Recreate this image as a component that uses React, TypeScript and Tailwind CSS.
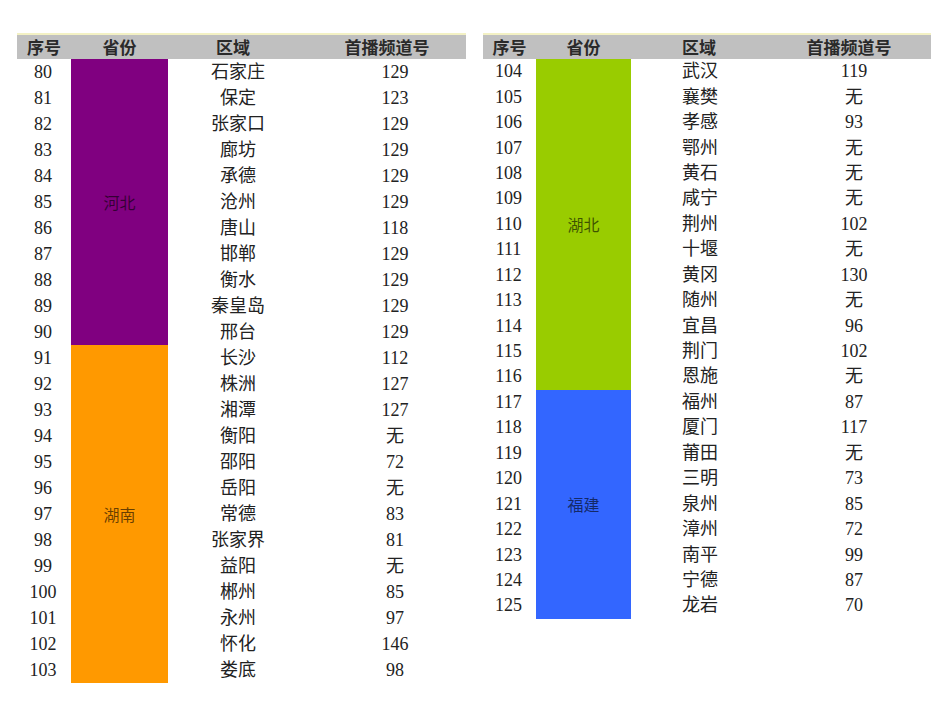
import React from "react";

type Row = [number, string, string];
type Group = { name: string; color: string; rows: Row[] };

const leftGroups: Group[] = [
  {
    name: "河北",
    color: "bg-[#800080]",
    rows: [
      [80, "石家庄", "129"],
      [81, "保定", "123"],
      [82, "张家口", "129"],
      [83, "廊坊", "129"],
      [84, "承德", "129"],
      [85, "沧州", "129"],
      [86, "唐山", "118"],
      [87, "邯郸", "129"],
      [88, "衡水", "129"],
      [89, "秦皇岛", "129"],
      [90, "邢台", "129"],
    ],
  },
  {
    name: "湖南",
    color: "bg-[#ff9900]",
    rows: [
      [91, "长沙", "112"],
      [92, "株洲", "127"],
      [93, "湘潭", "127"],
      [94, "衡阳", "无"],
      [95, "邵阳", "72"],
      [96, "岳阳", "无"],
      [97, "常德", "83"],
      [98, "张家界", "81"],
      [99, "益阳", "无"],
      [100, "郴州", "85"],
      [101, "永州", "97"],
      [102, "怀化", "146"],
      [103, "娄底", "98"],
    ],
  },
];

const rightGroups: Group[] = [
  {
    name: "湖北",
    color: "bg-[#99cc00]",
    rows: [
      [104, "武汉", "119"],
      [105, "襄樊", "无"],
      [106, "孝感", "93"],
      [107, "鄂州", "无"],
      [108, "黄石", "无"],
      [109, "咸宁", "无"],
      [110, "荆州", "102"],
      [111, "十堰", "无"],
      [112, "黄冈", "130"],
      [113, "随州", "无"],
      [114, "宜昌", "96"],
      [115, "荆门", "102"],
      [116, "恩施", "无"],
    ],
  },
  {
    name: "福建",
    color: "bg-[#3366ff]",
    rows: [
      [117, "福州", "87"],
      [118, "厦门", "117"],
      [119, "莆田", "无"],
      [120, "三明", "73"],
      [121, "泉州", "85"],
      [122, "漳州", "72"],
      [123, "南平", "99"],
      [124, "宁德", "87"],
      [125, "龙岩", "70"],
    ],
  },
];

interface TableProps {
  groups: Group[];
  rowH: number;
  rowCls: string;
  cols: [string, string, string, string];
  headCls: [string, string, string, string];
  cityCls: string;
  valueCls: string;
}

function ChannelTable({ groups, rowH, rowCls, cols, headCls, cityCls, valueCls }: TableProps) {
  const rows = groups.flatMap((g) => g.rows);

  return (
    <div className="flex flex-col">
      <div className="h-[2px] bg-[#f3f1c4]" />
      <div className="flex h-[24px] items-center bg-[#c0c0c0] text-[17px] font-bold text-[#2a2a2a] font-['Noto_Sans_CJK_SC',sans-serif]">
        <div className={`${cols[0]} ${headCls[0]} text-center`}>序号</div>
        <div className={`${cols[1]} ${headCls[1]} text-center`}>省份</div>
        <div className={`${cols[2]} ${headCls[2]} text-center`}>区域</div>
        <div className={`${cols[3]} ${headCls[3]} text-center`}>首播频道号</div>
      </div>
      <div className="flex text-[18px] text-[#222] font-['Liberation_Serif','Noto_Sans_CJK_SC',serif]">
        <div className={`${cols[0]} flex flex-col`}>
          {rows.map((r) => (
            <div key={r[0]} className={`${rowCls} flex items-center justify-center pr-[2px]`}>
              {r[0]}
            </div>
          ))}
        </div>
        <div className={`${cols[1]} flex flex-col`}>
          {groups.map((g) => (
            <div
              key={g.name}
              style={{ height: g.rows.length * rowH }}
              className={`${g.color} flex items-center justify-center text-[16px] text-black/60 font-['Noto_Sans_CJK_SC',sans-serif]`}
            >
              {g.name}
            </div>
          ))}
        </div>
        <div className={`${cols[2]} ${cityCls} flex flex-col`}>
          {rows.map((r) => (
            <div key={r[0]} className={`${rowCls} flex items-center justify-center`}>
              {r[1]}
            </div>
          ))}
        </div>
        <div className={`${cols[3]} ${valueCls} flex flex-col`}>
          {rows.map((r) => (
            <div key={r[0]} className={`${rowCls} flex items-center justify-center`}>
              {r[2]}
            </div>
          ))}
        </div>
      </div>
    </div>
  );
}

export default function App() {
  return (
    <div className="w-[950px] h-[713px] bg-white overflow-hidden">
      <div className="flex gap-[17px] pl-[17px] pt-[33px]">
        <ChannelTable
          groups={leftGroups}
          rowH={26}
          rowCls="h-[26px]"
          cols={["w-[54px]", "w-[97px]", "w-[140px]", "w-[158px]"]}
          headCls={["", "", "pr-[10px]", "pl-[0px]"]}
          cityCls=""
          valueCls="pl-[16px]"
        />
        <ChannelTable
          groups={rightGroups}
          rowH={25.45}
          rowCls="h-[25.45px]"
          cols={["w-[53px]", "w-[95px]", "w-[136px]", "w-[164px]"]}
          headCls={["", "", "", ""]}
          cityCls="pl-[2px]"
          valueCls="pl-[10px]"
        />
      </div>
    </div>
  );
}
